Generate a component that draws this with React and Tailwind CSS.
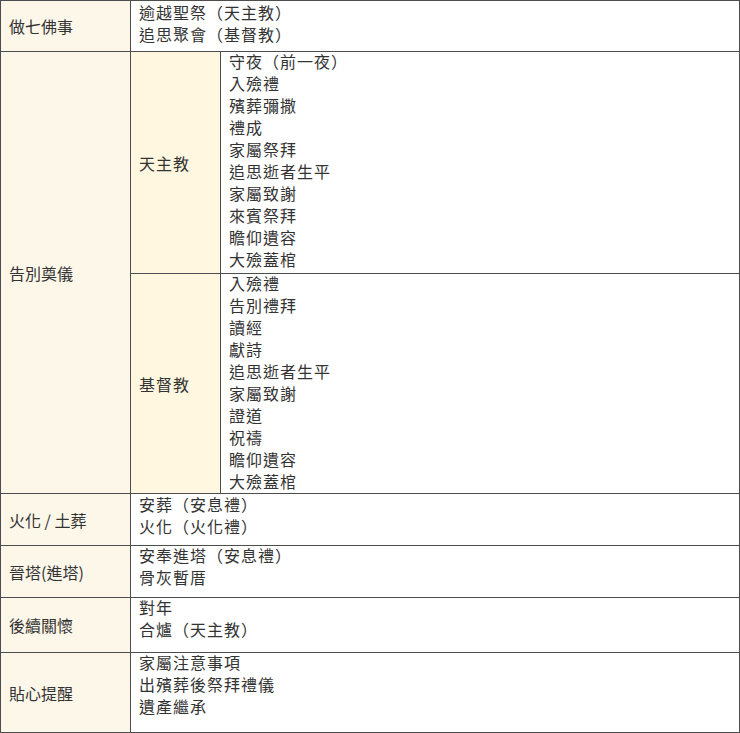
import React from 'react'

// ── Data ──────────────────────────────────────────────────────────────────────

const CATHOLIC = [
  '守夜（前一夜）',
  '入殮禮',
  '殯葬彌撒',
  '禮成',
  '家屬祭拜',
  '追思逝者生平',
  '家屬致謝',
  '來賓祭拜',
  '瞻仰遺容',
  '大殮蓋棺',
]

const CHRISTIAN = [
  '入殮禮',
  '告別禮拜',
  '讀經',
  '獻詩',
  '追思逝者生平',
  '家屬致謝',
  '證道',
  '祝禱',
  '瞻仰遺容',
  '大殮蓋棺',
]

const ROWS = [
  { label: '做七佛事', h: 'h-[51px]', pad: 'pt-[2px]', items: ['逾越聖祭（天主教）', '追思聚會（基督教）'] },
  { label: '火化 / 土葬', h: 'h-[52px]', pad: 'pt-[1px]', items: ['安葬（安息禮）', '火化（火化禮）'] },
  { label: '晉塔(進塔)', h: 'h-[52px]', pad: 'pt-0', items: ['安奉進塔（安息禮）', '骨灰暫厝'] },
  { label: '後續關懷', h: 'h-[55px]', pad: 'pt-0', items: ['對年', '合爐（天主教）'] },
  { label: '貼心提醒', h: 'h-[80px]', pad: 'pt-0', items: ['家屬注意事項', '出殯葬後祭拜禮儀', '遺產繼承'] },
]

const BORDER = 'border border-[#4d4d4d]'
const LABEL = `${BORDER} bg-[#fdf7e9] px-2 align-middle`
const SUB = `${BORDER} bg-[#fff7df] px-2 align-middle tracking-[1px]`
const CELL = `${BORDER} bg-white px-2 align-top tracking-[1px]`

function Lines({ items }) {
  return (
    <div className="-mt-[2px]">
      {items.map((t) => (
        <div key={t} className="whitespace-nowrap">
          {t}
        </div>
      ))}
    </div>
  )
}

function SimpleRow({ row }) {
  return (
    <tr className={row.h}>
      <td className={LABEL}>{row.label}</td>
      <td colSpan={2} className={`${CELL} ${row.pad}`}>
        <Lines items={row.items} />
      </td>
    </tr>
  )
}

// ── Main ──────────────────────────────────────────────────────────────────────

export default function App() {
  const [first, ...rest] = ROWS
  return (
    <div
      className="w-[740px] h-[733px] bg-white text-[#333] text-[16px] leading-[22px] [text-spacing-trim:space-all]"
      style={{ fontFamily: '"Noto Sans CJK TC", "Noto Sans", sans-serif' }}
    >
      <table className="w-[740px] table-fixed border-collapse">
        <colgroup>
          <col className="w-[130px]" />
          <col className="w-[90px]" />
          <col />
        </colgroup>
        <tbody>
          <SimpleRow row={first} />
          <tr className="h-[222px]">
            <td rowSpan={2} className={LABEL}>
              告別奠儀
            </td>
            <td className={SUB}>天主教</td>
            <td className={`${CELL} pt-0`}>
              <Lines items={CATHOLIC} />
            </td>
          </tr>
          <tr className="h-[220px]">
            <td className={SUB}>基督教</td>
            <td className={`${CELL} pt-0`}>
              <Lines items={CHRISTIAN} />
            </td>
          </tr>
          {rest.map((r) => (
            <SimpleRow key={r.label} row={r} />
          ))}
        </tbody>
      </table>
    </div>
  )
}
